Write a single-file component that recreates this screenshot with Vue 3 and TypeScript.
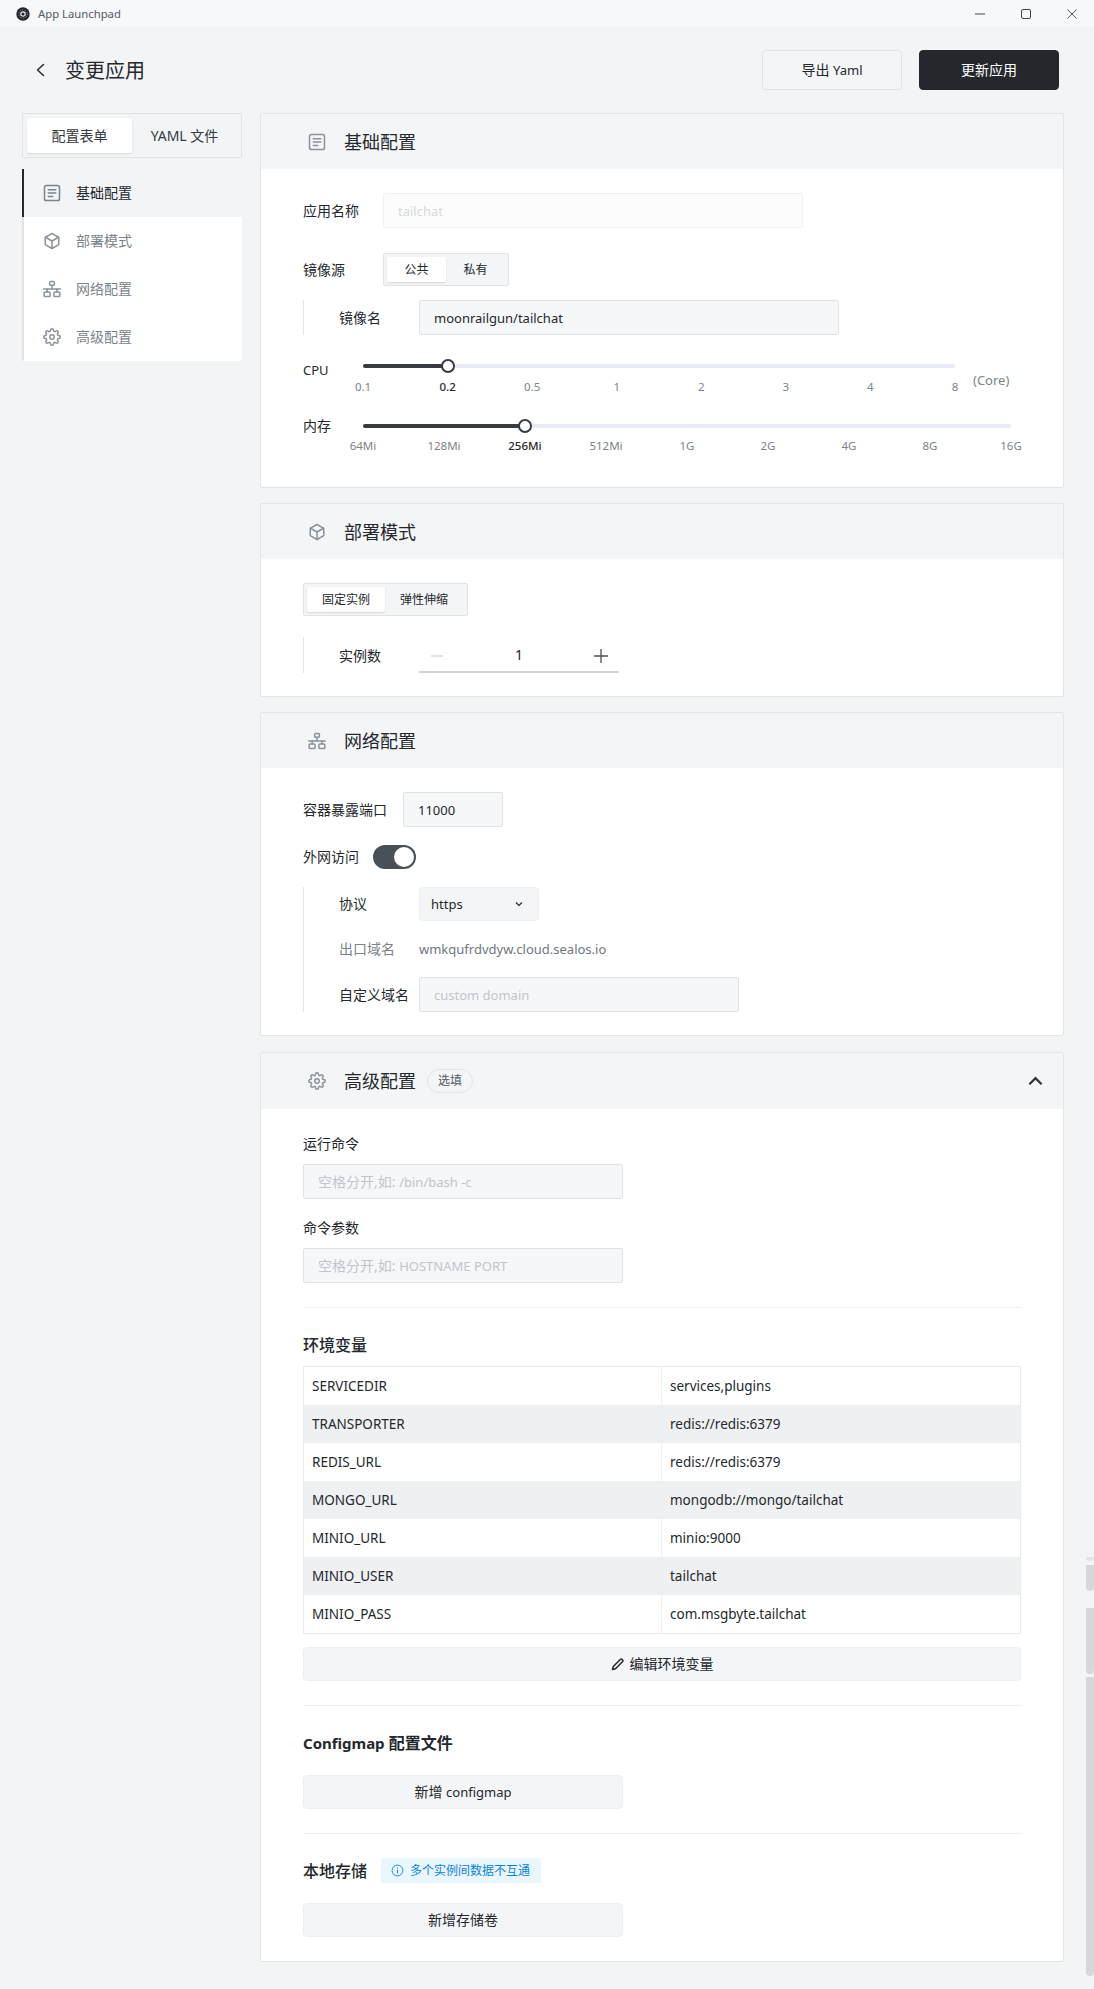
<script setup lang="ts">
interface Mark { label: string; active?: boolean }

const icons: Record<string, string[]> = {
  form: ['M4.500 2h15A2.500 2.500 0 0 1 22 4.500v15a2.500 2.500 0 0 1-2.500 2.500h-15A2.500 2.500 0 0 1 2 19.500v-15A2.500 2.500 0 0 1 4.500 2z', 'M7 7.500h10', 'M7 12h10', 'M7 16.500h6'],
  deploy: ['M12 2l8.500 4.800a1 1 0 0 1 .5.9v8.600a1 1 0 0 1-.5.9L12 22l-8.500-4.800a1 1 0 0 1-.5-.9V7.700a1 1 0 0 1 .5-.9z', 'M3.400 7L12 12l8.600-5', 'M12 12v10'],
  network: ['M10 2h4a1.200 1.200 0 0 1 1.200 1.200v2.600A1.200 1.200 0 0 1 14 7h-4a1.200 1.200 0 0 1-1.200-1.200V3.200A1.200 1.200 0 0 1 10 2z', 'M12 7v5', 'M1 12h22', 'M5.500 12v4', 'M18.500 12v4', 'M3 16h5a1.500 1.500 0 0 1 1.500 1.500v3A1.500 1.500 0 0 1 8 22H3a1.500 1.500 0 0 1-1.500-1.500v-3A1.500 1.500 0 0 1 3 16z', 'M16 16h5a1.500 1.500 0 0 1 1.500 1.500v3A1.500 1.500 0 0 1 21 22h-5a1.500 1.500 0 0 1-1.500-1.500v-3A1.500 1.500 0 0 1 16 16z'],
  gear: ['M12 15a3 3 0 1 0 0-6 3 3 0 0 0 0 6z', 'M19.4 15a1.65 1.65 0 0 0 .33 1.82l.06.06a2 2 0 0 1 0 2.83 2 2 0 0 1-2.83 0l-.06-.06a1.65 1.65 0 0 0-1.82-.33 1.65 1.65 0 0 0-1 1.51V21a2 2 0 0 1-2 2 2 2 0 0 1-2-2v-.09A1.65 1.65 0 0 0 9 19.4a1.65 1.65 0 0 0-1.82.33l-.06.06a2 2 0 0 1-2.83 0 2 2 0 0 1 0-2.83l.06-.06a1.65 1.65 0 0 0 .33-1.82 1.65 1.65 0 0 0-1.51-1H3a2 2 0 0 1-2-2 2 2 0 0 1 2-2h.09A1.65 1.65 0 0 0 4.6 9a1.65 1.65 0 0 0-.33-1.82l-.06-.06a2 2 0 0 1 0-2.83 2 2 0 0 1 2.83 0l.06.06a1.65 1.65 0 0 0 1.82.33H9a1.65 1.65 0 0 0 1-1.51V3a2 2 0 0 1 2-2 2 2 0 0 1 2 2v.09a1.65 1.65 0 0 0 1 1.51 1.65 1.65 0 0 0 1.82-.33l.06-.06a2 2 0 0 1 2.83 0 2 2 0 0 1 0 2.83l-.06.06a1.65 1.65 0 0 0-.33 1.82V9a1.65 1.65 0 0 0 1.51 1H21a2 2 0 0 1 2 2 2 2 0 0 1-2 2h-.09a1.65 1.65 0 0 0-1.51 1z'],
}

const navItems = [
  { icon: 'form', label: '基础配置', active: true },
  { icon: 'deploy', label: '部署模式', active: false },
  { icon: 'network', label: '网络配置', active: false },
  { icon: 'gear', label: '高级配置', active: false },
]

const toMarks = (labels: string[], active: number): Mark[] =>
  labels.map((label, i) => ({ label, active: i === active }))

const cpuMarks = toMarks(['0.1', '0.2', '0.5', '1', '2', '3', '4', '8'], 1)
const memMarks = toMarks(['64Mi', '128Mi', '256Mi', '512Mi', '1G', '2G', '4G', '8G', '16G'], 2)

const pct = (marks: Mark[]): string => {
  const i = marks.findIndex((m) => m.active)
  return `${(i / (marks.length - 1)) * 100}%`
}

const envs = [
  ['SERVICEDIR', 'services,plugins'],
  ['TRANSPORTER', 'redis://redis:6379'],
  ['REDIS_URL', 'redis://redis:6379'],
  ['MONGO_URL', 'mongodb://mongo/tailchat'],
  ['MINIO_URL', 'minio:9000'],
  ['MINIO_USER', 'tailchat'],
  ['MINIO_PASS', 'com.msgbyte.tailchat'],
]
</script>

<template>
  <div class="app">
    <header class="titlebar">
      <div class="title-left">
        <svg class="logo" viewBox="0 0 14 14" width="14" height="14">
          <circle cx="7" cy="7" r="6.700" fill="#22262b" />
          <circle cx="7" cy="7" r="4.300" fill="none" stroke="#aeb2b6" stroke-width=".8" stroke-dasharray="1.200 1.500" />
          <circle cx="7" cy="7" r="2.800" fill="#e8eaec" />
          <circle cx="7" cy="7" r="1.600" fill="#22262b" />
        </svg>
        <span>App Launchpad</span>
      </div>
      <div class="win-controls">
        <svg viewBox="0 0 10 10" width="10" height="10"><path d="M0 5h10" stroke="#444" fill="none" /></svg>
        <svg viewBox="0 0 10 10" width="10" height="10"><rect x=".5" y=".5" width="9" height="9" rx="1.500" stroke="#444" fill="none" /></svg>
        <svg viewBox="0 0 10 10" width="10" height="10"><path d="M.5.5l9 9M9.500.5l-9 9" stroke="#444" fill="none" stroke-width=".9" /></svg>
      </div>
    </header>

    <div class="page-head">
      <div class="head-left">
        <svg class="back" viewBox="0 0 12 16" width="12" height="16"><path d="M9.500 2.500L3.500 8l6 5.500" fill="none" stroke="#24282c" stroke-width="1.500" stroke-linecap="round" stroke-linejoin="round" /></svg>
        <h1>变更应用</h1>
      </div>
      <div class="head-actions">
        <button class="btn btn-outline">导出 <span class="lat">Yaml</span></button>
        <button class="btn btn-dark">更新应用</button>
      </div>
    </div>

    <div class="main">
      <aside class="side">
        <div class="side-tabs">
          <div class="side-tab on">配置表单</div>
          <div class="side-tab">YAML 文件</div>
        </div>
        <nav class="nav">
          <div v-for="n in navItems" :key="n.label" class="nav-item" :class="{ on: n.active }">
            <svg class="ico" viewBox="0 0 24 24" width="18" height="18"><path v-for="d in icons[n.icon]" :key="d" :d="d" /></svg>
            <span>{{ n.label }}</span>
          </div>
        </nav>
      </aside>

      <section class="cards">
        <article class="card">
          <div class="card-head">
            <svg class="ico" viewBox="0 0 24 24" width="18" height="18"><path v-for="d in icons.form" :key="d" :d="d" /></svg>
            <h2>基础配置</h2>
          </div>
          <div class="card-body b1">
            <div class="row">
              <label class="lbl w80">应用名称</label>
              <div class="input disabled w420"><span class="ph-light lat">tailchat</span></div>
            </div>
            <div class="row mt25">
              <label class="lbl w80">镜像源</label>
              <div class="seg seg-a">
                <div class="seg-item on">公共</div>
                <div class="seg-item">私有</div>
              </div>
            </div>
            <div class="sub mt14">
              <div class="row">
                <label class="lbl w80">镜像名</label>
                <div class="input w420 lat">moonrailgun/tailchat</div>
              </div>
            </div>
            <div class="slider-row mt25">
              <label class="lbl w60 lat">CPU</label>
              <div class="slider cpu">
                <div class="track">
                  <div class="fill" :style="{ width: pct(cpuMarks) }"></div>
                  <div class="thumb" :style="{ left: pct(cpuMarks) }"></div>
                </div>
                <div class="marks">
                  <div v-for="m in cpuMarks" :key="m.label" class="mark" :class="{ on: m.active }"><span>{{ m.label }}</span></div>
                </div>
              </div>
              <span class="unit">(Core)</span>
            </div>
            <div class="slider-row mt20">
              <label class="lbl w60">内存</label>
              <div class="slider mem">
                <div class="track">
                  <div class="fill" :style="{ width: pct(memMarks) }"></div>
                  <div class="thumb" :style="{ left: pct(memMarks) }"></div>
                </div>
                <div class="marks">
                  <div v-for="m in memMarks" :key="m.label" class="mark" :class="{ on: m.active }"><span>{{ m.label }}</span></div>
                </div>
              </div>
            </div>
          </div>
        </article>

        <article class="card">
          <div class="card-head">
            <svg class="ico" viewBox="0 0 24 24" width="18" height="18"><path v-for="d in icons.deploy" :key="d" :d="d" /></svg>
            <h2>部署模式</h2>
          </div>
          <div class="card-body b2">
            <div class="seg seg-b">
              <div class="seg-item on">固定实例</div>
              <div class="seg-item">弹性伸缩</div>
            </div>
            <div class="sub mt21 h36">
              <div class="row">
                <label class="lbl w80 low">实例数</label>
                <div class="stepper">
                  <svg viewBox="0 0 14 14" width="14" height="14"><path d="M1 7h12" stroke="#d9dcdf" stroke-width="1.500" /></svg>
                  <span class="count">1</span>
                  <svg viewBox="0 0 14 14" width="14" height="14"><path d="M0 7h14M7 0v14" stroke="#4b5157" stroke-width="1.300" /></svg>
                </div>
              </div>
            </div>
          </div>
        </article>

        <article class="card">
          <div class="card-head">
            <svg class="ico" viewBox="0 0 24 24" width="18" height="18"><path v-for="d in icons.network" :key="d" :d="d" /></svg>
            <h2>网络配置</h2>
          </div>
          <div class="card-body b3">
            <div class="row">
              <label class="lbl w100">容器暴露端口</label>
              <div class="input port lat">11000</div>
            </div>
            <div class="row mt18">
              <label class="lbl w70">外网访问</label>
              <div class="switch"><div class="knob"></div></div>
            </div>
            <div class="sub mt18 col">
              <div class="row">
                <label class="lbl w80">协议</label>
                <div class="select lat">
                  <span>https</span>
                  <svg viewBox="0 0 10 10" width="10" height="10"><path d="M2 3.500L5 6.500 8 3.500" fill="none" stroke="#24282c" stroke-width="1.200" /></svg>
                </div>
              </div>
              <div class="row domain">
                <label class="lbl w80 muted">出口域名</label>
                <span class="domain-v lat">wmkqufrdvdyw.cloud.sealos.io</span>
              </div>
              <div class="row">
                <label class="lbl w80">自定义域名</label>
                <div class="input custom"><span class="ph lat">custom domain</span></div>
              </div>
            </div>
          </div>
        </article>

        <article class="card last">
          <div class="card-head head4">
            <svg class="ico" viewBox="0 0 24 24" width="18" height="18"><path v-for="d in icons.gear" :key="d" :d="d" /></svg>
            <h2>高级配置</h2>
            <span class="pill">选填</span>
            <svg class="chev" viewBox="0 0 16 10" width="15" height="10"><path d="M1.500 8.500L8 2l6.500 6.500" fill="none" stroke="#30363c" stroke-width="2.400" /></svg>
          </div>
          <div class="card-body b4">
            <div class="lbl block">运行命令</div>
            <div class="input w320 mt10"><span class="ph">空格分开,如: <span class="lat">/bin/bash -c</span></span></div>
            <div class="lbl block mt19">命令参数</div>
            <div class="input w320 mt10"><span class="ph">空格分开,如: <span class="lat">HOSTNAME PORT</span></span></div>
            <hr class="div mt24" />
            <h3 class="sec t1">环境变量</h3>
            <div class="table">
              <div v-for="(e, i) in envs" :key="e[0]" class="tr" :class="{ alt: i % 2 === 1 }">
                <div class="td k">{{ e[0] }}</div>
                <div class="td">{{ e[1] }}</div>
              </div>
            </div>
            <button class="btn-soft full mt13">
              <svg viewBox="0 0 14 14" width="14" height="14"><path d="M1.500 12.500l.8-3L9.500 2.300a1 1 0 0 1 1.400 0l.8.8a1 1 0 0 1 0 1.400L4.500 11.700z" fill="none" stroke="#24282c" stroke-width="1.500" stroke-linejoin="round" /></svg>
              编辑环境变量
            </button>
            <hr class="div mt24" />
            <h3 class="sec t2"><span class="lat-b">Configmap</span> 配置文件</h3>
            <button class="btn-soft w320"><span>新增 <span class="lat">configmap</span></span></button>
            <hr class="div mt24" />
            <div class="sec-row">
              <h3 class="sec">本地存储</h3>
              <div class="note">
                <svg viewBox="0 0 14 14" width="13" height="13"><circle cx="7" cy="7" r="5.800" fill="none" stroke="#0884dd" stroke-width="1" /><path d="M7 6.200v3.800M7 3.800v1.100" stroke="#0884dd" stroke-width="1.100" /></svg>
                多个实例间数据不互通
              </div>
            </div>
            <button class="btn-soft w320">新增存储卷</button>
          </div>
        </article>
      </section>
    </div>

    <div class="scroll-bit s1"></div>
    <div class="scroll-bit s2"></div>
    <div class="scroll-bit s3"></div>
    <div class="scroll-bit s4"></div>
  </div>
</template>

<style>
html, body { margin: 0; background: #f3f4f6; }
</style>

<style scoped>
* { box-sizing: border-box; }
.app {
  position: relative;
  width: 1094px;
  height: 1989px;
  overflow: hidden;
  background: #f3f4f6;
  color: #24282c;
  font-family: "Noto Sans", "Noto Sans CJK SC", sans-serif;
  font-size: 14px;
  line-height: 20px;
}
.lat { font-size: 13px; }
.lat-b { font-size: 15px; }
.titlebar {
  height: 27px;
  background: #f7f8fa;
  display: flex;
  align-items: center;
  justify-content: space-between;
  padding: 0 17px 0 16px;
}
.title-left { display: flex; align-items: center; gap: 8px; font-size: 11.300px; color: #525a62; }
.win-controls { display: flex; align-items: center; gap: 36px; }
.page-head {
  height: 86px;
  display: flex;
  align-items: center;
  justify-content: space-between;
  padding: 0 35px 0 34px;
}
.head-left { display: flex; align-items: center; gap: 19px; }
.back { margin-top: -1px; }
h1 { margin: 2px 0 0; font-size: 20px; font-weight: 400; line-height: 28px; }
.head-actions { display: flex; gap: 17px; }
.btn {
  width: 140px;
  height: 40px;
  border-radius: 4px;
  font: inherit;
  padding: 0;
}
.btn-outline { background: #f4f5f7; border: 1px solid #dfe2e6; color: #24282c; }
.btn-dark { background: #24282c; border: 1px solid #24282c; color: #fff; }

.main { display: flex; align-items: flex-start; padding-left: 22px; gap: 18px; }
.side { width: 220px; flex: none; }
.side-tabs {
  height: 45px;
  border: 1px solid #dfe2e6;
  border-radius: 2px;
  padding: 4px;
  display: flex;
  background: #f3f4f6;
}
.side-tab { width: 105px; display: flex; align-items: center; justify-content: center; color: #333a40; }
.side-tab.on { background: #fff; border-radius: 2px; box-shadow: 0 1px 2px rgba(0, 0, 0, .12); }
.nav { margin-top: 11px; background: #fff; border-left: 2px solid #dfe2e6; border-radius: 2px; }
.nav-item {
  height: 48px;
  display: flex;
  align-items: center;
  gap: 15px;
  padding-left: 19px;
  color: #7b838b;
  margin-left: -2px;
  border-left: 2px solid transparent;
}
.nav-item.on { background: #f3f4f6; color: #24282c; border-left-color: #24282c; }
.ico { fill: none; stroke: #8a939c; stroke-width: 2; stroke-linecap: round; stroke-linejoin: round; flex: none; }
.nav-item.on .ico { stroke: #7b838b; }

.cards { width: 804px; flex: none; display: flex; flex-direction: column; gap: 15px; }
.card { background: #fff; border: 1px solid #e2e4e8; border-radius: 2px; }
.card.last { margin-top: 1px; }
.card-head {
  height: 55px;
  background: #f4f5f7;
  display: flex;
  align-items: center;
  padding-left: 47px;
  gap: 18px;
}
h2 { margin: 0; font-size: 18px; font-weight: 400; line-height: 26px; }
.card-body { padding-left: 42px; padding-right: 42px; }
.b1 { padding-top: 24px; padding-bottom: 32px; }
.b2 { padding-top: 24px; padding-bottom: 23px; }
.b3 { padding-top: 24px; padding-bottom: 23px; }
.b4 { padding-top: 25px; padding-bottom: 24px; }

.row { display: flex; align-items: center; }
.col { display: flex; flex-direction: column; }
.lbl { flex: none; color: #24282c; }
.low { margin-top: 2px; }
.w60 { width: 60px; }
.w70 { width: 70px; }
.w80 { width: 80px; }
.w100 { width: 100px; }
.muted { color: #7b838b; }
.block { display: block; }
.mt10 { margin-top: 10px; }
.mt13 { margin-top: 13px; }
.mt14 { margin-top: 14px; }
.mt18 { margin-top: 18px; }
.mt19 { margin-top: 19px; }
.mt20 { margin-top: 20px; }
.mt21 { margin-top: 21px; }
.mt24 { margin-top: 24px; }
.mt25 { margin-top: 25px; }

.input {
  height: 35px;
  display: flex;
  align-items: center;
  background: #f6f7f9;
  border: 1px solid #dfe2e6;
  border-radius: 2px;
  padding-left: 14px;
  color: #24282c;
}
.disabled { background: #fcfcfd; border-color: #f0f1f3; }
.w420 { width: 420px; }
.w320 { width: 320px; }
.port { width: 100px; }
.custom { width: 320px; }
.ph { color: #bfc5cb; }
.ph-light { color: #d6d9dc; }

.seg {
  height: 33px;
  display: flex;
  align-items: stretch;
  padding: 3px;
  background: #f4f5f7;
  border: 1px solid #dfe2e6;
  border-radius: 2px;
  font-size: 12px;
}
.seg-item { display: flex; align-items: center; justify-content: center; }
.seg-item.on { background: #fff; border-radius: 2px; box-shadow: 0 1px 2px rgba(0, 0, 0, .12); }
.seg-a { width: 126px; }
.seg-a .seg-item { width: 59px; }
.seg-b { width: 165px; }
.seg-b .seg-item { width: 78px; }

.sub { border-left: 1px solid #e2e4e8; padding-left: 35px; }
.h36 { height: 36px; }

.slider-row { display: flex; align-items: flex-start; }
.slider { flex: none; }
.cpu { width: 592px; padding-top: 4px; }
.mem { width: 648px; padding-top: 8px; }
.track { position: relative; height: 4px; background: #e8ebf3; border-radius: 2px; }
.fill { height: 4px; background: #363c42; border-radius: 2px; }
.thumb {
  position: absolute;
  top: 50%;
  width: 14px;
  height: 14px;
  margin: -7px 0 0 -7px;
  background: #fff;
  border: 2px solid #363c42;
  border-radius: 50%;
}
.marks { display: flex; justify-content: space-between; margin-top: 10px; height: 18px; font-size: 11.500px; line-height: 18px; color: #7b838b; }
.mem .marks { margin-top: 9px; }
.mark { width: 0; display: flex; justify-content: center; white-space: nowrap; }
.mark.on { color: #24282c; font-weight: 500; }
.unit { margin: 10px 0 0 18px; font-size: 13px; color: #7b838b; }

.stepper {
  width: 200px;
  height: 36px;
  display: flex;
  align-items: center;
  justify-content: space-between;
  padding: 3px 11px 0;
  border-bottom: 2px solid #ccd5e0;
}
.count { font-size: 14px; margin-top: -2px; }

.switch {
  width: 43px;
  height: 24px;
  background: #485058;
  border-radius: 12px;
  padding: 2px;
  display: flex;
  justify-content: flex-end;
}
.knob { width: 20px; height: 20px; background: #fff; border-radius: 50%; }
.select {
  width: 120px;
  height: 34px;
  background: #f4f5f7;
  border: 1px solid #eceef1;
  border-radius: 4px;
  padding: 0 14px 0 11px;
  display: flex;
  align-items: center;
  justify-content: space-between;
}
.domain { height: 20px; margin: 18px 0; }
.domain-v { color: #6f7780; }

.head4 { height: 56px; }
.pill {
  margin-left: -7px;
  width: 46px;
  height: 24px;
  border: 1px solid #e2e4e8;
  border-radius: 12px;
  display: flex;
  align-items: center;
  justify-content: center;
  font-size: 12px;
  color: #525a62;
  background: #f4f5f7;
}
.chev { margin-left: auto; margin-right: 20px; }

.div { border: 0; height: 1px; background: #eceef1; margin-bottom: 0; margin-left: 0; margin-right: 0; }
.sec { margin: 0; font-size: 16px; line-height: 24px; font-weight: 500; }
.t1 { margin-top: 25px; }
.t2 { margin-top: 25px; margin-bottom: 20px; font-weight: 700; }
.table { margin-top: 9px; border: 1px solid #e8eaed; }
.tr { display: flex; height: 38px; font-size: 13.500px; }
.tr.alt { background: #eff0f2; }
.td { display: flex; align-items: center; padding-left: 8px; flex: 1; }
.k { flex: none; width: 358px; padding-left: 8px; border-right: 1px solid #eceef1; }
.btn-soft {
  display: flex;
  align-items: center;
  justify-content: center;
  gap: 5px;
  height: 34px;
  font: inherit;
  color: #24282c;
  background: #f4f5f7;
  border: 1px solid #eceef1;
  border-radius: 4px;
}
.full { width: 100%; }
.sec-row { display: flex; align-items: center; gap: 14px; margin-top: 24px; margin-bottom: 20px; height: 25px; }
.note {
  height: 25px;
  width: 160px;
  display: flex;
  align-items: center;
  gap: 6px;
  padding-left: 10px;
  background: #eaf6fe;
  border-radius: 2px;
  font-size: 12px;
  color: #0884dd;
}
.scroll-bit { position: absolute; left: 1086px; width: 8px; background: #d5d8da; border-radius: 0 0 4px 4px; }
.s1 { top: 1557px; height: 4px; background: #e1e3e5; }
.s2 { top: 1565px; height: 26px; }
.s3 { top: 1608px; height: 66px; }
.s4 { top: 1677px; height: 299px; }
</style>
